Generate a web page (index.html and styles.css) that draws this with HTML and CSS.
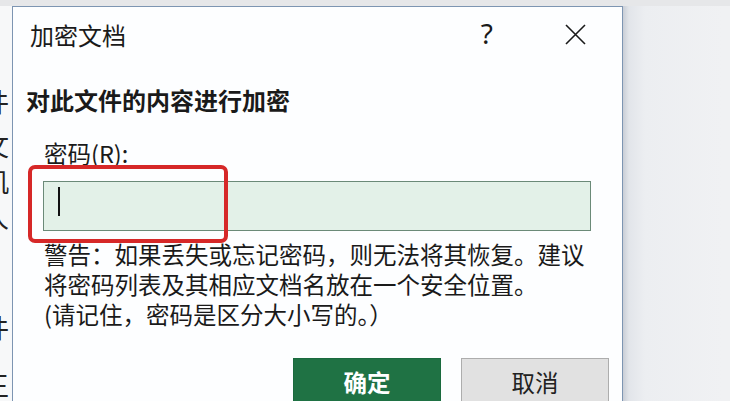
FILE: index.html
```html
<!DOCTYPE html>
<html>
<head>
<meta charset="utf-8">
<title>加密文档</title>
<link rel="stylesheet" href="styles.css">
</head>
<body>
<div class="topbar"></div>
<div class="screen">
    <div class="doc">
        <div class="doccol">
            <div class="docline first">件</div>
            <div class="docline">文</div>
            <div class="docline tight">机</div>
            <div class="docline tight">人</div>
            <div class="docline far">件</div>
            <div class="docline gap">王</div>
        </div>
    </div>
    <div class="dialog">
        <div class="titlebar">
            <div class="title">加密文档</div>
            <div class="help">?</div>
            <div class="close">
                <svg width="21" height="21" viewBox="0 0 21 21">
                    <path d="M1 1 L20 20 M20 1 L1 20" stroke="#1a1a1a" stroke-width="1.6" fill="none"/>
                </svg>
            </div>
        </div>
        <div class="body">
            <div class="heading">对此文件的内容进行加密</div>
            <div class="label">密码(R):</div>
            <div class="input"><div class="caret"></div></div>
            <div class="warning">
                <div>警告：如果丢失或忘记密码，则无法将其恢复。建议</div>
                <div>将密码列表及其相应文档名放在一个安全位置。</div>
                <div>(请记住，密码是区分大小写的。）</div>
            </div>
            <div class="buttons">
                <div class="btn ok">确定</div>
                <div class="btn cancel">取消</div>
            </div>
        </div>
        <div class="mark"></div>
    </div>
    <div class="backdrop"></div>
</div>
</body>
</html>
```

FILE: styles.css
```css
body {
    margin: 0;
    width: 730px;
    height: 401px;
    overflow: hidden;
    background: #eef0f3;
    font-family: "Noto Sans CJK SC", "Noto Sans", sans-serif;
    color: #1a1a1a;
}

.topbar {
    height: 6px;
    background: #e6e7e9;
}

.screen {
    display: flex;
    height: 395px;
}

.doc {
    width: 12px;
    flex: none;
    overflow: hidden;
    background: #f7f8f9;
}

.doccol {
    width: 30px;
    margin-left: -17px;
    font-size: 26px;
    line-height: 30px;
    color: #222;
}

.docline.first { margin-top: 80px; }
.docline { margin-top: 14px; }
.docline.tight { margin-top: 6px; }
.docline.far { margin-top: 80px; }
.docline.gap { margin-top: 28px; }

.dialog {
    position: relative;
    width: 609px;
    flex: none;
    background: #fdfeff;
    border: 1px solid #7d95b2;
    border-bottom: none;
}

.titlebar {
    display: flex;
    align-items: center;
    height: 56px;
    padding: 0 0 6px 17px;
}

.title {
    flex: 1;
    font-size: 24px;
    line-height: 30px;
}

.help {
    font-family: "Noto Sans", sans-serif;
    font-size: 28px;
    line-height: 30px;
    margin: -4px 72px 0 0;
}

.close {
    display: flex;
    margin: -2px 36px 0 0;
}

.body {
    padding: 0 13px;
}

.heading {
    margin-top: 16px;
    font-size: 24px;
    line-height: 30px;
    font-weight: 700;
}

.label {
    margin-top: 23px;
    margin-left: 18px;
    font-size: 23.5px;
    line-height: 30px;
}

.input {
    margin-top: 13px;
    margin-left: 17px;
    height: 48px;
    background: #e3f1e8;
    border: 1px solid #6b8a78;
    width: 546px;
}

.caret {
    width: 2px;
    height: 29px;
    margin: 5px 0 0 14px;
    background: #111;
}

.warning {
    margin-top: 8px;
    margin-left: 18px;
    font-size: 23.5px;
    line-height: 30px;
}

.buttons {
    display: flex;
    justify-content: flex-end;
    gap: 20px;
    margin-top: 29px;
}

.btn {
    width: 148px;
    height: 48px;
    box-sizing: border-box;
    text-align: center;
    font-size: 23.5px;
    line-height: 46px;
}

.ok {
    background: #1f7244;
    color: #fff;
    font-weight: 700;
    border: 1px solid #1a6a3e;
}

.cancel {
    background: #e1e1e1;
    border: 1px solid #adadad;
    color: #222;
}

.mark {
    position: absolute;
    left: 15px;
    top: 158px;
    width: 200px;
    height: 78px;
    box-sizing: border-box;
    border: 4px solid #d62828;
    border-radius: 7px;
}

.backdrop {
    flex: 1;
    background: linear-gradient(to right, #c9ced6 0, #e2e5ea 6px, #eceef1 22px, #f0f1f3 100px);
}
```
